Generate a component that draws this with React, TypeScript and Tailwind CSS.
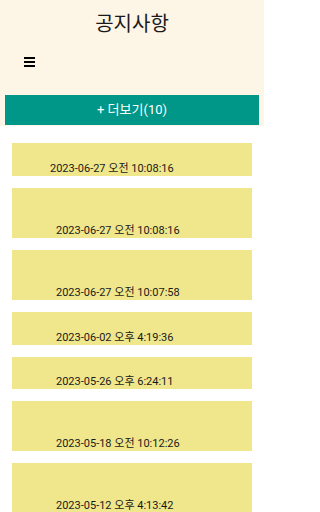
import React from "react";

const notices = [
  { date: "2023-06-27 오전 10:08:16", h: "h-[33px]", pl: "pl-[38px]" },
  { date: "2023-06-27 오전 10:08:16", h: "h-[50px]", pl: "pl-[44px]" },
  { date: "2023-06-27 오전 10:07:58", h: "h-[50px]", pl: "pl-[44px]" },
  { date: "2023-06-02 오후 4:19:36", h: "h-[33px]", pl: "pl-[44px]" },
  { date: "2023-05-26 오후 6:24:11", h: "h-[32px]", pl: "pl-[44px]" },
  { date: "2023-05-18 오전 10:12:26", h: "h-[50px]", pl: "pl-[44px]" },
  { date: "2023-05-12 오후 4:13:42", h: "h-[50px]", pl: "pl-[44px]" },
];

export default function App() {
  return (
    <div className="w-[264px] min-h-screen bg-white font-['Roboto','Noto_Sans_CJK_KR',sans-serif] text-[#1a1a1a]">
      <header className="bg-[#fdf5e6] h-[126px] flex flex-col">
        <h1 className="text-center text-[20px] leading-[28px] pt-[9px] font-['Noto_Sans_CJK_KR',sans-serif]">
          공지사항
        </h1>
        <div className="mt-[20px] ml-[24px] flex flex-col gap-[2px] w-[11px]">
          <span className="block h-[2px] bg-black" />
          <span className="block h-[2px] bg-black" />
          <span className="block h-[2px] bg-black" />
        </div>
        <button className="mt-[28px] mx-[5px] h-[30px] bg-[#009688] text-white text-[13px] flex items-center justify-center">
          + 더보기(10)
        </button>
      </header>
      <ul className="flex flex-col gap-[12px] pt-[17px] px-[12px]">
        {notices.map((n, i) => (
          <li key={i} className={`bg-[#f0e68c] ${n.h} flex flex-col justify-end`}>
            <span className={`${n.pl} text-[11px] leading-[13px] pb-[1px]`}>{n.date}</span>
          </li>
        ))}
      </ul>
    </div>
  );
}
